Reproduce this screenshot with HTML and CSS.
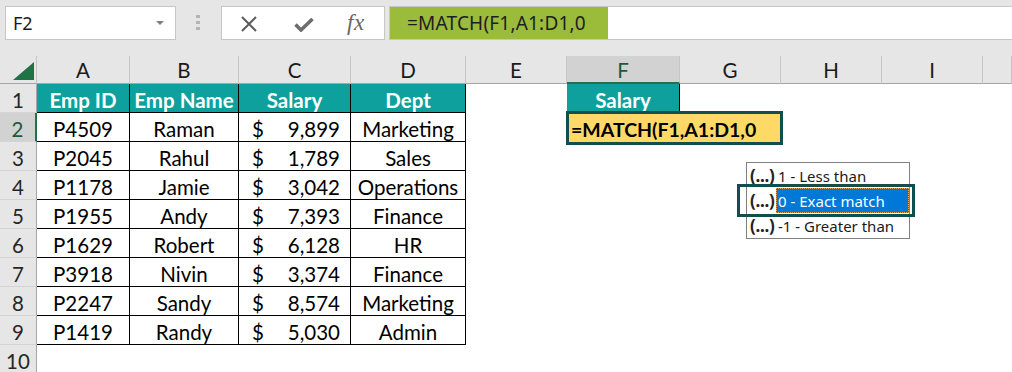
FILE: index.html
```html
<!DOCTYPE html>
<html>
<head>
<meta charset="utf-8">
<link rel="stylesheet" href="styles.css">
</head>
<body>
<div class="toolbar">
  <div class="namebox"><span>F2</span><span class="nb-arrow"></span></div>
  <div class="grip"><i></i><i></i><i></i></div>
  <div class="fx-tools">
    <svg class="ic-x" width="18" height="16" viewBox="0 0 18 16"><path d="M2 1 L16 15 M16 1 L2 15" stroke="#5c5c5c" stroke-width="2" fill="none"/></svg>
    <svg class="ic-ok" width="20" height="14" viewBox="0 0 20 14"><path d="M1.5 6.5 L7 12 L18.5 1" stroke="#6e6e6e" stroke-width="3.6" fill="none"/></svg>
    <span class="fx">fx</span>
  </div>
  <div class="formula"><span class="formula-text">=MATCH(F1,A1:D1,0</span></div>
</div>

<div class="sheet">
  <div class="row colhead">
    <div class="c corner"><svg width="21" height="18" viewBox="0 0 21 18"><path d="M21 0 L21 18 L0 18 Z" fill="#217346"/></svg></div>
    <div class="c ch">A</div><div class="c ch">B</div><div class="c ch">C</div><div class="c ch">D</div>
    <div class="c ch">E</div><div class="c ch sel">F</div><div class="c ch">G</div><div class="c ch">H</div>
    <div class="c ch">I</div><div class="c ch"></div>
  </div>

  <div class="row">
    <div class="c rh">1</div>
    <div class="c t th">Emp ID</div><div class="c t th">Emp Name</div><div class="c t th">Salary</div><div class="c t th">Dept</div>
    <div class="c th f1">Salary</div>
  </div>

  <div class="row">
    <div class="c rh sel">2</div>
    <div class="c t">P4509</div><div class="c t">Raman</div><div class="c t money"><span>$</span><span>9,899</span></div><div class="c t">Marketing</div>
    <div class="c editor">=MATCH(F1,A1:D1,0</div>
  </div>

  <div class="row">
    <div class="c rh">3</div>
    <div class="c t">P2045</div><div class="c t">Rahul</div><div class="c t money"><span>$</span><span>1,789</span></div><div class="c t">Sales</div>
  </div>

  <div class="row">
    <div class="c rh">4</div>
    <div class="c t">P1178</div><div class="c t">Jamie</div><div class="c t money"><span>$</span><span>3,042</span></div><div class="c t">Operations</div>
  </div>

  <div class="row">
    <div class="c rh">5</div>
    <div class="c t">P1955</div><div class="c t">Andy</div><div class="c t money"><span>$</span><span>7,393</span></div><div class="c t">Finance</div>
  </div>

  <div class="row">
    <div class="c rh">6</div>
    <div class="c t">P1629</div><div class="c t">Robert</div><div class="c t money"><span>$</span><span>6,128</span></div><div class="c t">HR</div>
  </div>

  <div class="row">
    <div class="c rh">7</div>
    <div class="c t">P3918</div><div class="c t">Nivin</div><div class="c t money"><span>$</span><span>3,374</span></div><div class="c t">Finance</div>
  </div>

  <div class="row">
    <div class="c rh">8</div>
    <div class="c t">P2247</div><div class="c t">Sandy</div><div class="c t money"><span>$</span><span>8,574</span></div><div class="c t">Marketing</div>
  </div>

  <div class="row">
    <div class="c rh">9</div>
    <div class="c t">P1419</div><div class="c t">Randy</div><div class="c t money"><span>$</span><span>5,030</span></div><div class="c t">Admin</div>
  </div>

  <div class="row">
    <div class="c rh">10</div>
  </div>
</div>

<div class="dropdown">
  <div class="item"><span class="ell">(...)</span><span class="lbl">1 - Less than</span></div>
  <div class="item active"><span class="ell">(...)</span><span class="lbl">0 - Exact match</span></div>
  <div class="item"><span class="ell">(...)</span><span class="lbl">-1 - Greater than</span></div>
</div>
<div class="focus-ring"></div>
</body>
</html>
```

FILE: styles.css
```css
* { box-sizing: border-box; }
html, body { margin: 0; padding: 0; }
body {
  width: 1012px;
  height: 372px;
  overflow: hidden;
  background: #ffffff;
  font-family: Lato, "Noto Sans", sans-serif;
  position: relative;
}

/* ---------- toolbar ---------- */
.toolbar {
  height: 56px;
  background: #e6e6e6;
  display: flex;
  align-items: flex-start;
  padding-top: 6px;
}
.namebox {
  margin-left: 5px;
  width: 171px;
  height: 34px;
  border: 1px solid #c6c6c6;
  background: #fff;
  display: flex;
  align-items: center;
  padding-left: 7px;
  font-family: "Noto Sans", sans-serif;
  font-size: 18px;
  color: #1a1a1a;
}
.nb-arrow {
  margin-left: auto;
  margin-right: 11px;
  width: 0;
  height: 0;
  border-left: 4px solid transparent;
  border-right: 4px solid transparent;
  border-top: 4px solid #7f7f7f;
}
.grip {
  margin-left: 20px;
  width: 4px;
  display: flex;
  flex-direction: column;
  gap: 3px;
  padding-top: 9px;
}
.grip i {
  display: block;
  width: 4px;
  height: 3px;
  background: #b4b4b4;
}
.fx-tools {
  margin-left: 21px;
  width: 164px;
  height: 34px;
  background: #fff;
  border: 1px solid #c6c6c6;
  display: flex;
  align-items: center;
  padding-left: 18px;
}
.ic-x { margin-top: 2px; }
.ic-ok { margin-left: 36px; margin-top: 4px; }
.fx {
  margin-left: 33px;
  font-family: "Liberation Serif", serif;
  font-style: italic;
  font-size: 23px;
  color: #666;
  letter-spacing: 0.5px;
}
.formula {
  margin-left: 4px;
  flex: 1;
  height: 34px;
  background: #fff;
  border: 1px solid #c6c6c6;
  border-right: none;
  display: flex;
}
.formula-text {
  width: 218px;
  background: #9bbb3b;
  display: flex;
  align-items: center;
  padding-left: 17px;
  font-family: "Noto Sans", sans-serif;
  font-size: 19px;
  color: #1e1e1e;
  letter-spacing: 0.2px;
}

/* ---------- sheet ---------- */
.row {
  display: grid;
  grid-template-columns: 37px 93px 109px 112px 115px 101px 113px 101px 101px 101px 29px;
  height: 29px;
}
.row.colhead { height: 28px; }

.c {
  display: flex;
  align-items: center;
  justify-content: center;
  font-size: 20.5px;
  color: #000;
  white-space: nowrap;
  padding-top: 3px;
}

.corner {
  background: #e6e6e6;
  border-right: 1px solid #c6c6c6;
  border-bottom: 1px solid #a6a6a6;
  align-items: flex-end;
  justify-content: flex-end;
  padding: 0 2px 3px 0;
}
.ch {
  background: #e6e6e6;
  border-right: 1px solid #c6c6c6;
  border-bottom: 1px solid #a6a6a6;
  color: #1a1a1a;
  padding-top: 1px;
}
.ch.sel {
  background: #d2d2d2;
  border-bottom: 2px solid #217346;
  color: #1d5a38;
}
.rh {
  background: #e6e6e6;
  border-right: 1px solid #a6a6a6;
  border-bottom: 1px solid #d4d4d4;
  color: #262626;
}
.rh.sel {
  background: #d2d2d2;
  border-right: 2px solid #217346;
  color: #1d5a38;
}

.t {
  border-right: 1px solid #000;
  border-bottom: 1px solid #000;
}
.th {
  background: #0ea09c;
  color: #fff;
  font-weight: 700;
}
.f1 {
  grid-column: 7;
  border-right: 1px solid #000;
}
.money {
  justify-content: space-between;
  padding-left: 13px;
  padding-right: 10px;
}

.editor {
  grid-column: 7 / span 2;
  margin: -2px -2px -3px -1px;
  border: 3px solid #124e50;
  background: #ffd966;
  font-size: 19.5px;
  font-weight: 700;
  justify-content: flex-start;
  padding-left: 2px;
  padding-top: 2px;
  z-index: 2;
}

/* ---------- autocomplete dropdown ---------- */
.dropdown {
  position: absolute;
  left: 746px;
  top: 162px;
  width: 164px;
  border: 1px solid #808080;
  background: #fff;
  font-family: "Noto Sans", sans-serif;
  font-size: 15px;
  color: #1a1a1a;
}
.item {
  height: 25px;
  display: flex;
  align-items: center;
}
.ell {
  width: 29px;
  padding-left: 3px;
  font-size: 17px;
  font-weight: 700;
  letter-spacing: -0.3px;
  color: #222;
}
.lbl {
  padding-left: 2px;
  height: 100%;
  display: flex;
  align-items: center;
  flex: 1;
}
.item.active .lbl {
  background: #0078d7;
  color: #fff;
  outline: 1px dotted #e4a257;
  outline-offset: -1px;
}
.focus-ring {
  position: absolute;
  left: 737px;
  top: 184px;
  width: 178px;
  height: 33px;
  border: 3px solid #124e50;
}
```
